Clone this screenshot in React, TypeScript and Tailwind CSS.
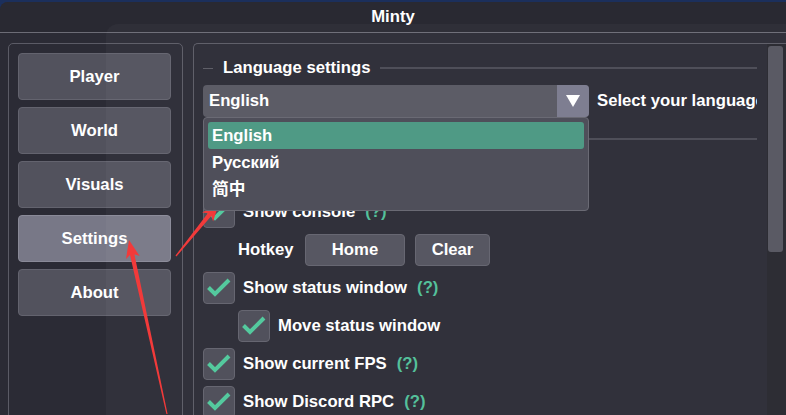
import React from 'react';

const font = "font-['Liberation_Sans','Noto_Sans_CJK_SC',sans-serif]";

function arrowPoints(tx: number, ty: number, px: number, py: number) {
  const headLen = 18;
  const headW = 7;
  const tailW = 0.6;
  const baseW = 2.3;
  const dx = px - tx;
  const dy = py - ty;
  const len = Math.hypot(dx, dy);
  const ux = dx / len;
  const uy = dy / len;
  const nx = -uy;
  const ny = ux;
  const bx = px - ux * headLen;
  const by = py - uy * headLen;
  const pts = [
    [tx + nx * tailW, ty + ny * tailW],
    [bx + ux * 3 + nx * baseW, by + uy * 3 + ny * baseW],
    [bx + nx * headW, by + ny * headW],
    [px, py],
    [bx - nx * headW, by - ny * headW],
    [bx + ux * 3 - nx * baseW, by + uy * 3 - ny * baseW],
    [tx - nx * tailW, ty - ny * tailW],
  ];
  return pts.map((p) => p.map((v) => v.toFixed(1)).join(',')).join(' ');
}

function CheckBox() {
  return (
    <div className="w-[32px] h-[32px] shrink-0 rounded-[4px] bg-[#4c4c57] border border-[#62626d] flex items-center justify-center">
      <svg width="30" height="30" viewBox="0 0 30 30">
        <path d="M4.5 14.5 L11 21 L25 7" fill="none" stroke="#4fc89b" strokeWidth="4" />
      </svg>
    </div>
  );
}

function SectionHeader({ label }: { label: string }) {
  return (
    <div className="flex items-center h-[20px]">
      <div className="w-[10px] h-px bg-[#5a5a64]" />
      <span className="px-[10px] text-white font-bold text-[16.7px]">{label}</span>
      <div className="flex-1 h-[2px] bg-[#4a4a54]" />
    </div>
  );
}

function CheckRow({ label, help, indent }: { label: string; help?: boolean; indent?: boolean }) {
  return (
    <div className={`flex items-center h-[32px] gap-[8px] ${indent ? 'pl-[35px]' : ''}`}>
      <CheckBox />
      <span className="text-white font-bold text-[16.7px] whitespace-nowrap">{label}</span>
      {help && <span className="ml-[2px] font-bold text-[16.7px] text-[#4fbf98]">(?)</span>}
    </div>
  );
}

export default function App() {
  const menu = ['Player', 'World', 'Visuals', 'Settings', 'About'];

  return (
    <div className={`relative w-[786px] h-[415px] overflow-hidden bg-[#1b2f5c] ${font}`}>
      <div className="absolute top-[2px] left-0 right-0 bottom-0 rounded-tl-[8px] bg-[#2b2b35] flex flex-col">
        {/* title bar */}
        <div className="h-[31px] shrink-0 flex items-center justify-center bg-[#292932] border-b border-[#6c6c76] rounded-tl-[8px]">
          <span className="text-white font-bold text-[16.7px]">Minty</span>
        </div>

        <div className="flex-1 flex gap-[10px] pt-[10px] pl-[8px]">
          {/* left menu */}
          <div className="w-[175px] shrink-0 h-[400px] border border-[#5b5b66] rounded-[5px] pt-[9px] pl-[9px] flex flex-col gap-[7px]">
            {menu.map((m) => (
              <div
                key={m}
                className={`w-[153px] h-[47px] rounded-[4px] border flex items-center justify-center text-white font-bold text-[16.7px] ${
                  m === 'Settings' ? 'bg-[#787887] border-[#8a8a98]' : 'bg-[#52525d] border-[#63636e]'
                }`}
              >
                {m}
              </div>
            ))}
          </div>

          {/* right panel */}
          <div className="flex-1 min-w-0 h-[400px] border border-r-0 border-[#5b5b66] rounded-tl-[5px] flex">
            <div className="flex-1 min-w-0 pt-[14px] pl-[9px] pr-[10px] flex flex-col">
              <SectionHeader label="Language settings" />

              <div className="mt-[7px] flex items-center gap-[8px]">
                <div className="relative w-[386px] h-[32px] shrink-0">
                  <div className="w-full h-full rounded-[4px] bg-[#575762] flex items-center overflow-hidden">
                    <span className="flex-1 pl-[6px] text-white font-bold text-[16.7px]">English</span>
                    <div className="w-[32px] h-full bg-[#7a7a8e] flex items-center justify-center">
                      <svg width="16" height="14" viewBox="0 0 16 14">
                        <path d="M1 1 H15 L8 13 Z" fill="#ffffff" />
                      </svg>
                    </div>
                  </div>

                  {/* open dropdown */}
                  <div className="absolute z-10 top-full left-0 w-full h-[94px] rounded-[4px] bg-[#4f4f5a] border border-[#6a6a74] pt-[4px] px-[4px] flex flex-col">
                    <div className="h-[27px] rounded-[3px] bg-[#4f9a85] pl-[4px] flex items-center text-white font-bold text-[16.7px]">
                      English
                    </div>
                    <div className="h-[27px] pl-[4px] flex items-center text-white font-bold text-[16.7px]">Русский</div>
                    <div className="h-[27px] pl-[4px] flex items-center text-white font-bold text-[16.7px]">简中</div>
                  </div>
                </div>
                <span className="flex-1 min-w-0 overflow-hidden whitespace-nowrap text-white font-bold text-[16.7px]">
                  Select your language
                </span>
              </div>

              <div className="mt-[12px]">
                <SectionHeader label="General settings" />
              </div>

              <div className="mt-[47px] flex flex-col gap-[6px]">
                <CheckRow label="Show console" help />
                <div className="flex items-center h-[32px] pl-[35px] gap-[10px]">
                  <span className="w-[57px] text-white font-bold text-[16.7px]">Hotkey</span>
                  <div className="w-[100px] h-[32px] rounded-[4px] bg-[#52525d] border border-[#63636e] flex items-center justify-center text-white font-bold text-[16.7px]">
                    Home
                  </div>
                  <div className="w-[75px] h-[32px] rounded-[4px] bg-[#52525d] border border-[#63636e] flex items-center justify-center text-white font-bold text-[16.7px]">
                    Clear
                  </div>
                </div>
                <CheckRow label="Show status window" help />
                <CheckRow label="Move status window" indent />
                <CheckRow label="Show current FPS" help />
                <CheckRow label="Show Discord RPC" help />
              </div>
            </div>

            {/* scrollbar */}
            <div className="w-[19px] shrink-0 bg-[#27272e] pt-[2px] pl-[1px]">
              <div className="w-[15px] h-[206px] rounded-[3px] bg-[#55555f]" />
            </div>
          </div>
        </div>
      </div>

      {/* faint window behind */}
      <div className="absolute left-[106px] top-[24px] right-0 bottom-0 rounded-tl-[12px] bg-white/[0.03] pointer-events-none" />

      {/* red annotation arrows */}
      <svg className="absolute inset-0 pointer-events-none" width="786" height="415" viewBox="0 0 786 415">
        <polygon points={arrowPoints(176, 256, 219, 203)} fill="#f23a3a" />
        <polygon points={arrowPoints(167, 414, 129, 240)} fill="#f23a3a" />
      </svg>
    </div>
  );
}
